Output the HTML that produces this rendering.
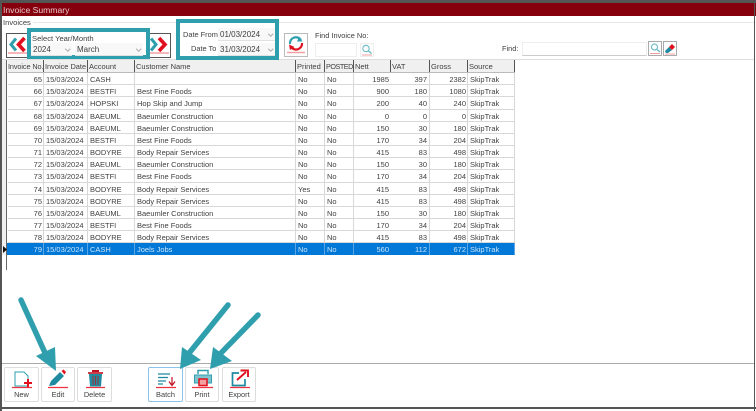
<!DOCTYPE html>
<html><head><meta charset="utf-8"><style>
html,body{margin:0;padding:0;background:#fff}
#p{position:relative;width:756px;height:411px;overflow:hidden;background:#fff;font-family:"Liberation Sans",sans-serif;font-size:7.5px;color:#3f3f3f;filter:blur(0.3px)}
.a{position:absolute;white-space:nowrap}
.r{position:absolute;left:8px;width:507px;height:12px;border-bottom:1px solid #d8d8d8;box-sizing:content-box;background:#fff}
.r span,.h span{position:absolute;top:0;line-height:13px;white-space:nowrap;overflow:hidden;box-sizing:border-box;padding:0 1px 0 2px;height:12px;border-right:1px solid #d8d8d8}
.r .c1{left:-1px;width:37px;text-align:right}.r .c2{left:36px;width:44px}.r .c3{left:80px;width:47px}.r .c4{left:127px;width:161px}
.r .c5{left:288px;width:29px}.r .c6{left:317px;width:29px}.r .c7{left:346px;width:37px;text-align:right;padding-right:2px;border-right:0}.r .c8{left:383px;width:39px;text-align:right;padding-right:2px}.r .c9{left:422px;width:38px;text-align:right;padding-right:1px}.r .c10{left:460px;width:47px}
.s{background:#0078d7;color:#cfe4f7}.s span{border-color:#5aa5e3}
.h{position:absolute;left:8px;top:60px;width:507px;height:13px;background:#f0f0f0;border-bottom:1px solid #bbb;box-sizing:border-box}
.h span{border-right:1px solid #555;line-height:13px;height:12px;padding-left:1px}
.b{position:absolute;top:367px;height:35px;background:#fff;border:1px solid #ddd;border-radius:2px;box-sizing:border-box;text-align:center;font-size:7.4px}
.b svg{position:absolute;left:0;top:0}
.b div{position:absolute;left:0;right:0;top:21.5px}
.sel{position:absolute;height:13px;background:#f8f8f8;border-bottom:1px solid #e2e2e2;line-height:14px;font-size:8px;box-sizing:border-box;padding-left:2px}
.sel i{position:absolute;right:3px;top:4px;width:2.5px;height:2.5px;border-right:1px solid #aaa;border-bottom:1px solid #aaa;transform:rotate(45deg)}
.tb{position:absolute;background:#fff;border:1px solid #ccc;box-sizing:border-box}
</style></head><body><div id="p">
<div class="a" style="left:0;top:0;width:756px;height:3px;background:#555"></div>
<div class="a" style="left:0;top:3px;width:756px;height:13px;background:#85000c"></div>
<div class="a" style="left:3px;top:4px;color:#e9c9cc;font-size:8.6px;line-height:12px">Invoice Summary</div>
<div class="a" style="left:0;top:0;width:2px;height:411px;background:#555"></div>
<div class="a" style="right:1px;top:0;width:1px;height:411px;background:#555"></div>
<div class="a" style="left:0;top:407px;width:756px;height:2px;background:#555"></div>
<div class="a" style="left:3px;top:17.5px;font-size:7.6px;line-height:10px;background:#fff;padding-right:2px;z-index:1">Invoices</div>
<div class="a" style="left:3px;top:22px;width:751px;height:1px;background:#e8e8e8"></div>
<div class="a" style="left:2px;top:59px;width:752px;height:1px;background:#ddd"></div>

<!-- year nav -->
<div class="a" style="left:6px;top:33px;width:165px;height:25px;border:1px solid #555;box-sizing:border-box;background:#fff"></div>
<svg class="a" style="left:6px;top:33px" width="24" height="25"><path d="M10 5.5L5 11.5L10 17.5" fill="none" stroke="#2f9fae" stroke-width="3"/><path d="M18.5 5L12.5 11.5L18.5 18" fill="none" stroke="#e0101f" stroke-width="3.6"/><path d="M2 20H22" stroke="#f0a0a0" stroke-width="1.5"/></svg>
<svg class="a" style="left:147px;top:33px" width="24" height="25"><path d="M4 5.5L9 11.5L4 17.5" fill="none" stroke="#2f9fae" stroke-width="3"/><path d="M12 5L18 11.5L12 18" fill="none" stroke="#e0101f" stroke-width="3.6"/><path d="M2 20H22" stroke="#f0a0a0" stroke-width="1.5"/></svg>
<div class="a" style="left:27px;top:28px;width:123px;height:31px;border:4px solid #2f9fae;box-sizing:border-box;background:#fff"></div>
<div class="a" style="left:32px;top:33.5px;font-size:7.6px;line-height:10px">Select Year/Month</div>
<div class="sel" style="left:31px;top:43px;width:41px">2024<i></i></div>
<div class="sel" style="left:75px;top:43px;width:68px">March<i></i></div>

<!-- dates -->
<div class="a" style="left:176px;top:19px;width:103px;height:41px;border:4px solid #2f9fae;box-sizing:border-box;background:#fff"></div>
<div class="a" style="left:183px;top:29.5px;font-size:7.4px;line-height:10px">Date From</div>
<div class="a" style="left:191px;top:43.5px;font-size:7.4px;line-height:10px">Date To</div>
<div class="sel" style="left:218px;top:28px;width:57px">01/03/2024<i></i></div>
<div class="sel" style="left:218px;top:43px;width:57px">31/03/2024<i></i></div>

<!-- refresh -->
<div class="a" style="left:284px;top:33px;width:24px;height:24px;border:1px solid #bbb;box-sizing:border-box;background:#fff"></div>
<svg class="a" style="left:284px;top:33px" width="24" height="24"><path d="M6 11 A6 6 0 0 1 17 7" fill="none" stroke="#2f9fae" stroke-width="2.2"/><path d="M15 3.5L18.5 8.5L13 8.5Z" fill="#2f9fae"/><path d="M18 10 A6 6 0 0 1 8 15" fill="none" stroke="#e0101f" stroke-width="2.2"/><path d="M5 11.5L6 17L10.5 14Z" fill="#e0101f"/><path d="M3 19.5H21" stroke="#f0a0a0" stroke-width="1.6"/></svg>

<div class="a" style="left:315px;top:31px;font-size:7.4px;line-height:10px">Find Invoice No:</div>
<div class="tb" style="left:315px;top:43px;width:42px;height:14px;border-color:#eee"></div>
<svg class="a" style="left:360px;top:43px" width="14" height="14"><rect x=".5" y=".5" width="13" height="13" fill="#fff" stroke="#eee"/><circle cx="6" cy="5.5" r="3.2" fill="none" stroke="#5fb5c0" stroke-width="1"/><path d="M8.5 8L11.5 10.5" stroke="#5fb5c0" stroke-width="1.2"/><path d="M2 12H12" stroke="#f0a0a0"/></svg>

<div class="a" style="left:502px;top:44px;font-size:7.4px;line-height:10px">Find:</div>
<div class="tb" style="left:522px;top:42px;width:125px;height:14px;border-color:#eee;border-bottom-color:#ccc"></div>
<div class="tb" style="left:648px;top:41px;width:14px;height:15px;border-color:#aaa"></div>
<div class="tb" style="left:663px;top:41px;width:14px;height:15px;border-color:#aaa"></div>
<svg class="a" style="left:648px;top:41px" width="30" height="15"><circle cx="6.5" cy="6" r="3" fill="none" stroke="#5fb5c0" stroke-width="1"/><path d="M9 8.5L12 11" stroke="#5fb5c0" stroke-width="1.2"/><path d="M2 12.5H12" stroke="#f0a0a0"/><path d="M17 10L21 6L24 9L20 12H18Z" fill="#1f8ba0"/><path d="M21 6L24 3L27 6L24 9Z" fill="#e0101f"/><path d="M17 13H27" stroke="#f0a0a0"/></svg>

<!-- grid -->
<div class="a" style="left:2px;top:60px;width:5px;height:195px;background:#f0f0f0"></div>
<div class="a" style="left:6px;top:60px;width:1px;height:210px;background:#666"></div>
<div class="h">
<span style="left:-1px;width:37px;font-size:7.3px;letter-spacing:-.1px">Invoice No.</span><span style="left:36px;width:44px;font-size:7.4px">Invoice Date</span><span style="left:80px;width:47px">Account</span><span style="left:127px;width:161px">Customer Name</span><span style="left:288px;width:29px">Printed</span><span style="left:317px;width:29px;font-size:7.2px;letter-spacing:-.45px">POSTED</span><span style="left:346px;width:37px">Nett</span><span style="left:383px;width:39px">VAT</span><span style="left:422px;width:38px">Gross</span><span style="left:460px;width:47px">Source</span>
</div>
<div class="r" style="top:73px;height:11.2px"><span class="c1">65</span><span class="c2">15/03/2024</span><span class="c3">CASH</span><span class="c4"></span><span class="c5">No</span><span class="c6">No</span><span class="c7">1985</span><span class="c8">397</span><span class="c9">2382</span><span class="c10">SkipTrak</span></div>
<div class="r" style="top:85.2px;height:11.2px"><span class="c1">66</span><span class="c2">15/03/2024</span><span class="c3">BESTFI</span><span class="c4">Best Fine Foods</span><span class="c5">No</span><span class="c6">No</span><span class="c7">900</span><span class="c8">180</span><span class="c9">1080</span><span class="c10">SkipTrak</span></div>
<div class="r" style="top:97.4px;height:11.2px"><span class="c1">67</span><span class="c2">15/03/2024</span><span class="c3">HOPSKI</span><span class="c4">Hop Skip and Jump</span><span class="c5">No</span><span class="c6">No</span><span class="c7">200</span><span class="c8">40</span><span class="c9">240</span><span class="c10">SkipTrak</span></div>
<div class="r" style="top:109.5px;height:11.2px"><span class="c1">68</span><span class="c2">15/03/2024</span><span class="c3">BAEUML</span><span class="c4">Baeumler Construction</span><span class="c5">No</span><span class="c6">No</span><span class="c7">0</span><span class="c8">0</span><span class="c9">0</span><span class="c10">SkipTrak</span></div>
<div class="r" style="top:121.7px;height:11.2px"><span class="c1">69</span><span class="c2">15/03/2024</span><span class="c3">BAEUML</span><span class="c4">Baeumler Construction</span><span class="c5">No</span><span class="c6">No</span><span class="c7">150</span><span class="c8">30</span><span class="c9">180</span><span class="c10">SkipTrak</span></div>
<div class="r" style="top:133.9px;height:11.2px"><span class="c1">70</span><span class="c2">15/03/2024</span><span class="c3">BESTFI</span><span class="c4">Best Fine Foods</span><span class="c5">No</span><span class="c6">No</span><span class="c7">170</span><span class="c8">34</span><span class="c9">204</span><span class="c10">SkipTrak</span></div>
<div class="r" style="top:146px;height:11.2px"><span class="c1">71</span><span class="c2">15/03/2024</span><span class="c3">BODYRE</span><span class="c4">Body Repair Services</span><span class="c5">No</span><span class="c6">No</span><span class="c7">415</span><span class="c8">83</span><span class="c9">498</span><span class="c10">SkipTrak</span></div>
<div class="r" style="top:158.2px;height:11.2px"><span class="c1">72</span><span class="c2">15/03/2024</span><span class="c3">BAEUML</span><span class="c4">Baeumler Construction</span><span class="c5">No</span><span class="c6">No</span><span class="c7">150</span><span class="c8">30</span><span class="c9">180</span><span class="c10">SkipTrak</span></div>
<div class="r" style="top:170.4px;height:11.2px"><span class="c1">73</span><span class="c2">15/03/2024</span><span class="c3">BESTFI</span><span class="c4">Best Fine Foods</span><span class="c5">No</span><span class="c6">No</span><span class="c7">170</span><span class="c8">34</span><span class="c9">204</span><span class="c10">SkipTrak</span></div>
<div class="r" style="top:182.5px;height:11.2px"><span class="c1">74</span><span class="c2">15/03/2024</span><span class="c3">BODYRE</span><span class="c4">Body Repair Services</span><span class="c5">Yes</span><span class="c6">No</span><span class="c7">415</span><span class="c8">83</span><span class="c9">498</span><span class="c10">SkipTrak</span></div>
<div class="r" style="top:194.7px;height:11.2px"><span class="c1">75</span><span class="c2">15/03/2024</span><span class="c3">BODYRE</span><span class="c4">Body Repair Services</span><span class="c5">No</span><span class="c6">No</span><span class="c7">415</span><span class="c8">83</span><span class="c9">498</span><span class="c10">SkipTrak</span></div>
<div class="r" style="top:206.9px;height:11.2px"><span class="c1">76</span><span class="c2">15/03/2024</span><span class="c3">BAEUML</span><span class="c4">Baeumler Construction</span><span class="c5">No</span><span class="c6">No</span><span class="c7">150</span><span class="c8">30</span><span class="c9">180</span><span class="c10">SkipTrak</span></div>
<div class="r" style="top:219px;height:11.2px"><span class="c1">77</span><span class="c2">15/03/2024</span><span class="c3">BESTFI</span><span class="c4">Best Fine Foods</span><span class="c5">No</span><span class="c6">No</span><span class="c7">170</span><span class="c8">34</span><span class="c9">204</span><span class="c10">SkipTrak</span></div>
<div class="r" style="top:231.2px;height:11.2px"><span class="c1">78</span><span class="c2">15/03/2024</span><span class="c3">BODYRE</span><span class="c4">Body Repair Services</span><span class="c5">No</span><span class="c6">No</span><span class="c7">415</span><span class="c8">83</span><span class="c9">498</span><span class="c10">SkipTrak</span></div>
<div class="r s" style="top:243.4px;height:11.6px;border:0"><span class="c1">79</span><span class="c2">15/03/2024</span><span class="c3">CASH</span><span class="c4">Joels Jobs</span><span class="c5">No</span><span class="c6">No</span><span class="c7">560</span><span class="c8">112</span><span class="c9">672</span><span class="c10">SkipTrak</span></div>
<div class="a" style="left:7px;top:243.4px;width:1px;height:11.6px;background:#0078d7"></div>
<svg class="a" style="left:2px;top:246px" width="5" height="7"><path d="M1 0L5 3.5L1 7Z" fill="#111"/></svg>

<!-- bottom toolbar -->
<div class="a" style="left:2px;top:363px;width:752px;height:1px;background:#aaa"></div>
<div class="b" style="left:4px;width:35px">
<svg width="35" height="24"><path d="M10 4H19L23 8V18H10Z" fill="#fff" stroke="#2f9fae" stroke-width="1"/><path d="M19 15H27M23 11V19" stroke="#e0101f" stroke-width="2"/><path d="M7 19.5H27" stroke="#ee3340" stroke-width="1.2"/></svg><div>New</div></div>
<div class="b" style="left:41px;width:34px">
<svg width="34" height="24"><path d="M7 18L9 13L18 4L22 8L13 17Z" fill="#1f8ba0"/><path d="M19.5 3L21.5 1.5L24 4L22.5 6.5Z" fill="#e0101f"/><path d="M6 19.5H26" stroke="#ee3340" stroke-width="1.2"/></svg><div>Edit</div></div>
<div class="b" style="left:77px;width:35px">
<svg width="35" height="24"><path d="M11 6H24L23 18.5H12Z" fill="#1f8ba0"/><path d="M10 5H25" stroke="#c01020" stroke-width="1.6"/><path d="M14 2H21V4H14Z" fill="#c01020"/><path d="M15 8V17M17.5 8V17M20 8V17" stroke="#a03038"/><path d="M8 19.5H27" stroke="#ee3340" stroke-width="1.2"/></svg><div>Delete</div></div>
<div class="b" style="left:148px;width:35px;border-color:#8cc3ea">
<svg width="35" height="24"><path d="M9 6H21M9 9.5H19M9 13H17M9 16H14" stroke="#1f8ba0" stroke-width="1.2"/><path d="M23 9V17M20 13.5L23 17.5L26 13.5" fill="none" stroke="#c01020" stroke-width="1.2"/><path d="M7 19.5H27" stroke="#ee3340" stroke-width="1.2"/></svg><div>Batch</div></div>
<div class="b" style="left:185px;width:34px">
<svg width="34" height="24"><path d="M12 6V2.5H22V6" fill="none" stroke="#2f9fae" stroke-width="1.5"/><path d="M8.5 7H25.5V15H8.5Z" fill="#7fc3cd" stroke="#2f9fae"/><path d="M13 11H21V17.5H13Z" fill="#f4a0a0" stroke="#e0101f" stroke-width="1.5"/><path d="M6 19.5H27" stroke="#ee3340" stroke-width="1.2"/></svg><div>Print</div></div>
<div class="b" style="left:222px;width:34px">
<svg width="34" height="24"><path d="M16 5H9.5V17.5H22V11" fill="none" stroke="#1f8ba0" stroke-width="1.7"/><path d="M14 12L23 4M17.5 2.5H25V9" fill="none" stroke="#e0101f" stroke-width="1.9"/><path d="M7 19.5H27" stroke="#ee3340" stroke-width="1.2"/></svg><div>Export</div></div>

<!-- arrows -->
<svg class="a" style="left:0;top:0" width="756" height="411">
<g stroke="#2f9fae" stroke-width="5.5" stroke-linecap="round" fill="#2f9fae">
<path d="M21 300L46 355"/><path d="M228 305L190 352"/><path d="M258 315L221 353"/></g>
<g fill="#2f9fae">
<path d="M36 356L55 347L56 371Z"/><path d="M180 369L182 347L201 360Z"/><path d="M210 369L213 347L232 361Z"/></g>
</svg>
</div></body></html>
